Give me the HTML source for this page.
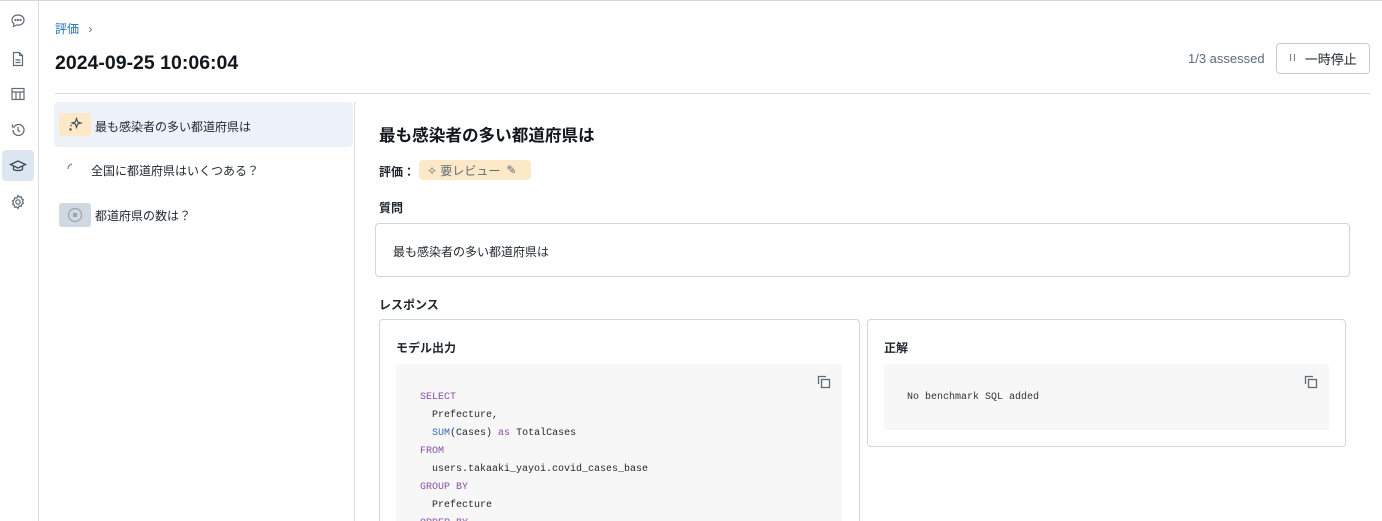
<!DOCTYPE html>
<html><head><meta charset="utf-8"><style>
*{box-sizing:border-box;margin:0;padding:0}
html,body{width:1382px;height:521px;overflow:hidden}
body{background:#fff;font-family:"Liberation Sans","Noto Sans CJK JP",sans-serif;color:#1f272d}
#w{position:relative;width:1382px;height:521px;overflow:hidden}
.abs{position:absolute}
.side{left:0;top:0;width:39px;height:521px;border-right:1px solid #d8dee5}
.ic{position:absolute;left:7px;width:22px;height:22px;display:flex;align-items:center;justify-content:center}
.mono{font-family:"Liberation Mono",monospace;font-size:10px;line-height:18px}
.kw{color:#8a4fa5}.fn{color:#2f6fb3}
</style></head><body><div id="w">
<div class="abs" style="left:0;top:0;width:1382px;height:1px;background:#d1d7de"></div>
<div class="abs side"></div>
<div class="ic" style="top:10px"><svg width="16" height="16" viewBox="0 0 16 16" fill="none" stroke="#5f6b77" stroke-width="1.2"><path d="M8 2C4.5 2 2 4.2 2 7c0 1.5.7 2.8 1.9 3.7L3.5 13.5 6.5 12c.5.1 1 .1 1.5.1 3.5 0 6-2.2 6-5S11.5 2 8 2z"/><circle cx="5.5" cy="7" r=".5" fill="#5f6b77"/><circle cx="8" cy="7" r=".5" fill="#5f6b77"/><circle cx="10.5" cy="7" r=".5" fill="#5f6b77"/></svg></div>
<div class="ic" style="top:48px"><svg width="16" height="16" viewBox="0 0 16 16" fill="none" stroke="#5f6b77" stroke-width="1.2"><path d="M3.5 1.5h6l3 3v10h-9z M9.5 1.5v3h3 M5.5 9h5 M5.5 11.5h5"/></svg></div>
<div class="ic" style="top:83px"><svg width="16" height="16" viewBox="0 0 16 16" fill="none" stroke="#5f6b77" stroke-width="1.2"><rect x="2" y="2.5" width="12" height="11"/><path d="M2 6h12 M6 6v7.5 M10 6v7.5"/></svg></div>
<div class="ic" style="top:119px"><svg width="16" height="16" viewBox="0 0 16 16" fill="none" stroke="#5f6b77" stroke-width="1.3"><path d="M3 8a5.5 5.5 0 1 0 1.6-3.9 M2.5 2.5v2.5H5 M8 5v3.3l2 1.5"/></svg></div>
<div class="abs" style="left:2px;top:150px;width:32px;height:31px;background:#dce6f1;border-radius:4px"></div>
<div class="ic" style="top:155px"><svg width="18" height="16" viewBox="0 0 18 16" fill="none" stroke="#3f4a55" stroke-width="1.3"><path d="M9 3L1.5 6.5 9 10l7.5-3.5z M4.5 8v3.5c1.5 1.3 7.5 1.3 9 0V8"/></svg></div>
<div class="ic" style="top:191px"><svg width="16" height="16" viewBox="0 0 16 16" fill="none" stroke="#5f6b77" stroke-width="1.2"><circle cx="8" cy="8" r="2.2"/><path d="M8 1.5l1.2 1.6 2-.4.4 2 1.8 1-.9 1.8.9 1.8-1.8 1-.4 2-2-.4L8 14.5l-1.2-1.6-2 .4-.4-2-1.8-1 .9-1.8-.9-1.8 1.8-1 .4-2 2 .4z"/></svg></div>

<div class="abs" style="left:55px;top:20px;font-size:12px;color:#2272b4">評価 <span style="color:#5f6b77;margin-left:6px">›</span></div>
<div class="abs" style="left:55px;top:52px;font-size:19.5px;font-weight:bold;color:#11171c">2024-09-25 10:06:04</div>
<div class="abs" style="left:1188px;top:51px;font-size:13px;color:#5f6b77">1/3 assessed</div>
<div class="abs" style="left:1276px;top:43px;width:94px;height:31px;border:1px solid #c4ccd6;border-radius:4px;font-size:13px;display:flex;align-items:center;justify-content:center;color:#1f272d"><span style="font-size:10px;color:#5f6b77;margin-right:8px;letter-spacing:1px">II</span>一時停止</div>
<div class="abs" style="left:55px;top:93px;width:1315px;height:1px;background:#d8dee5"></div>

<div class="abs" style="left:54px;top:102px;width:299px;height:45px;background:#edf2f9;border-radius:4px"></div>
<div class="abs" style="left:354px;top:102px;width:1px;height:419px;background:#d8dee5"></div>
<div class="abs" style="left:59px;top:113px;width:32px;height:23px;background:#fde8c8;border-radius:3px;display:flex;align-items:center;justify-content:center"><svg width="16" height="16" viewBox="0 0 16 16" fill="#3f4a55"><path d="M9.5 1.5l1.1 3.4 3.4 1.1-3.4 1.1-1.1 3.4-1.1-3.4L5 6l3.4-1.1z" fill="none" stroke="#3f4a55" stroke-width="1.1"/><circle cx="3.5" cy="12.5" r="1.2"/><circle cx="4" cy="8.5" r=".8"/></svg></div>
<div class="abs" style="left:95px;top:118px;font-size:12px">最も感染者の多い都道府県は</div>
<svg class="abs" style="left:66px;top:162px" width="12" height="12" viewBox="0 0 12 12"><path d="M2 7A5 5 0 0 1 6 2" fill="none" stroke="#7a8591" stroke-width="1.3"/></svg>
<div class="abs" style="left:91px;top:162px;font-size:12px">全国に都道府県はいくつある？</div>
<div class="abs" style="left:59px;top:203px;width:32px;height:24px;background:#d0d8e1;border-radius:3px;display:flex;align-items:center;justify-content:center"><svg width="16" height="16" viewBox="0 0 16 16"><circle cx="8" cy="8" r="6.5" fill="none" stroke="#9aa5b1" stroke-width="1.2"/><rect x="6" y="6" width="4" height="4" fill="#9aa5b1"/></svg></div>
<div class="abs" style="left:95px;top:207px;font-size:12px">都道府県の数は？</div>

<div class="abs" style="left:379px;top:122px;font-size:16.6px;font-weight:bold;color:#11171c">最も感染者の多い都道府県は</div>
<div class="abs" style="left:379px;top:163px;font-size:12px;font-weight:bold">評価：</div>
<div class="abs" style="left:419px;top:160px;width:112px;height:20px;background:#fde8c8;border-radius:4px;font-size:12px;color:#5f6b77;display:flex;align-items:center;padding-left:8px">✧ 要レビュー <span style="margin-left:6px">✎</span></div>
<div class="abs" style="left:379px;top:199px;font-size:12px;font-weight:bold">質問</div>
<div class="abs" style="left:375px;top:223px;width:975px;height:54px;border:1px solid #cfd6de;border-radius:4px;font-size:12px;padding:19px 0 0 17px">最も感染者の多い都道府県は</div>
<div class="abs" style="left:379px;top:296px;font-size:12px;font-weight:bold">レスポンス</div>

<div class="abs" style="left:379px;top:319px;width:481px;height:202px;border:1px solid #cfd6de;border-bottom:none;border-radius:4px 4px 0 0"></div>
<div class="abs" style="left:396px;top:339px;font-size:12px;font-weight:bold">モデル出力</div>
<div class="abs mono" style="left:396px;top:364px;width:446px;height:157px;overflow:hidden;background:#f7f7f7;border-radius:3px 3px 0 0;padding:25px 0 0 24px;white-space:pre"><span class="kw">SELECT</span>
  Prefecture,
  <span class="fn">SUM</span>(Cases) <span class="kw">as</span> TotalCases
<span class="kw">FROM</span>
  users.takaaki_yayoi.covid_cases_base
<span class="kw">GROUP BY</span>
  Prefecture
<span class="kw">ORDER BY</span></div>
<svg class="abs" style="left:817px;top:375px" width="14" height="14" viewBox="0 0 14 14" fill="none" stroke="#5f6b77" stroke-width="1.3"><path d="M1.5 9V1.5H9"/><rect x="4.5" y="4.5" width="8" height="8"/></svg>

<div class="abs" style="left:867px;top:319px;width:479px;height:128px;border:1px solid #cfd6de;border-radius:4px"></div>
<div class="abs" style="left:884px;top:339px;font-size:12px;font-weight:bold">正解</div>
<div class="abs mono" style="left:884px;top:364px;width:445px;height:66px;background:#f7f7f7;border-radius:3px;padding:25px 0 0 23px;color:#333">No benchmark SQL added</div>
<svg class="abs" style="left:1304px;top:375px" width="14" height="14" viewBox="0 0 14 14" fill="none" stroke="#5f6b77" stroke-width="1.3"><path d="M1.5 9V1.5H9"/><rect x="4.5" y="4.5" width="8" height="8"/></svg>
</div></body></html>
